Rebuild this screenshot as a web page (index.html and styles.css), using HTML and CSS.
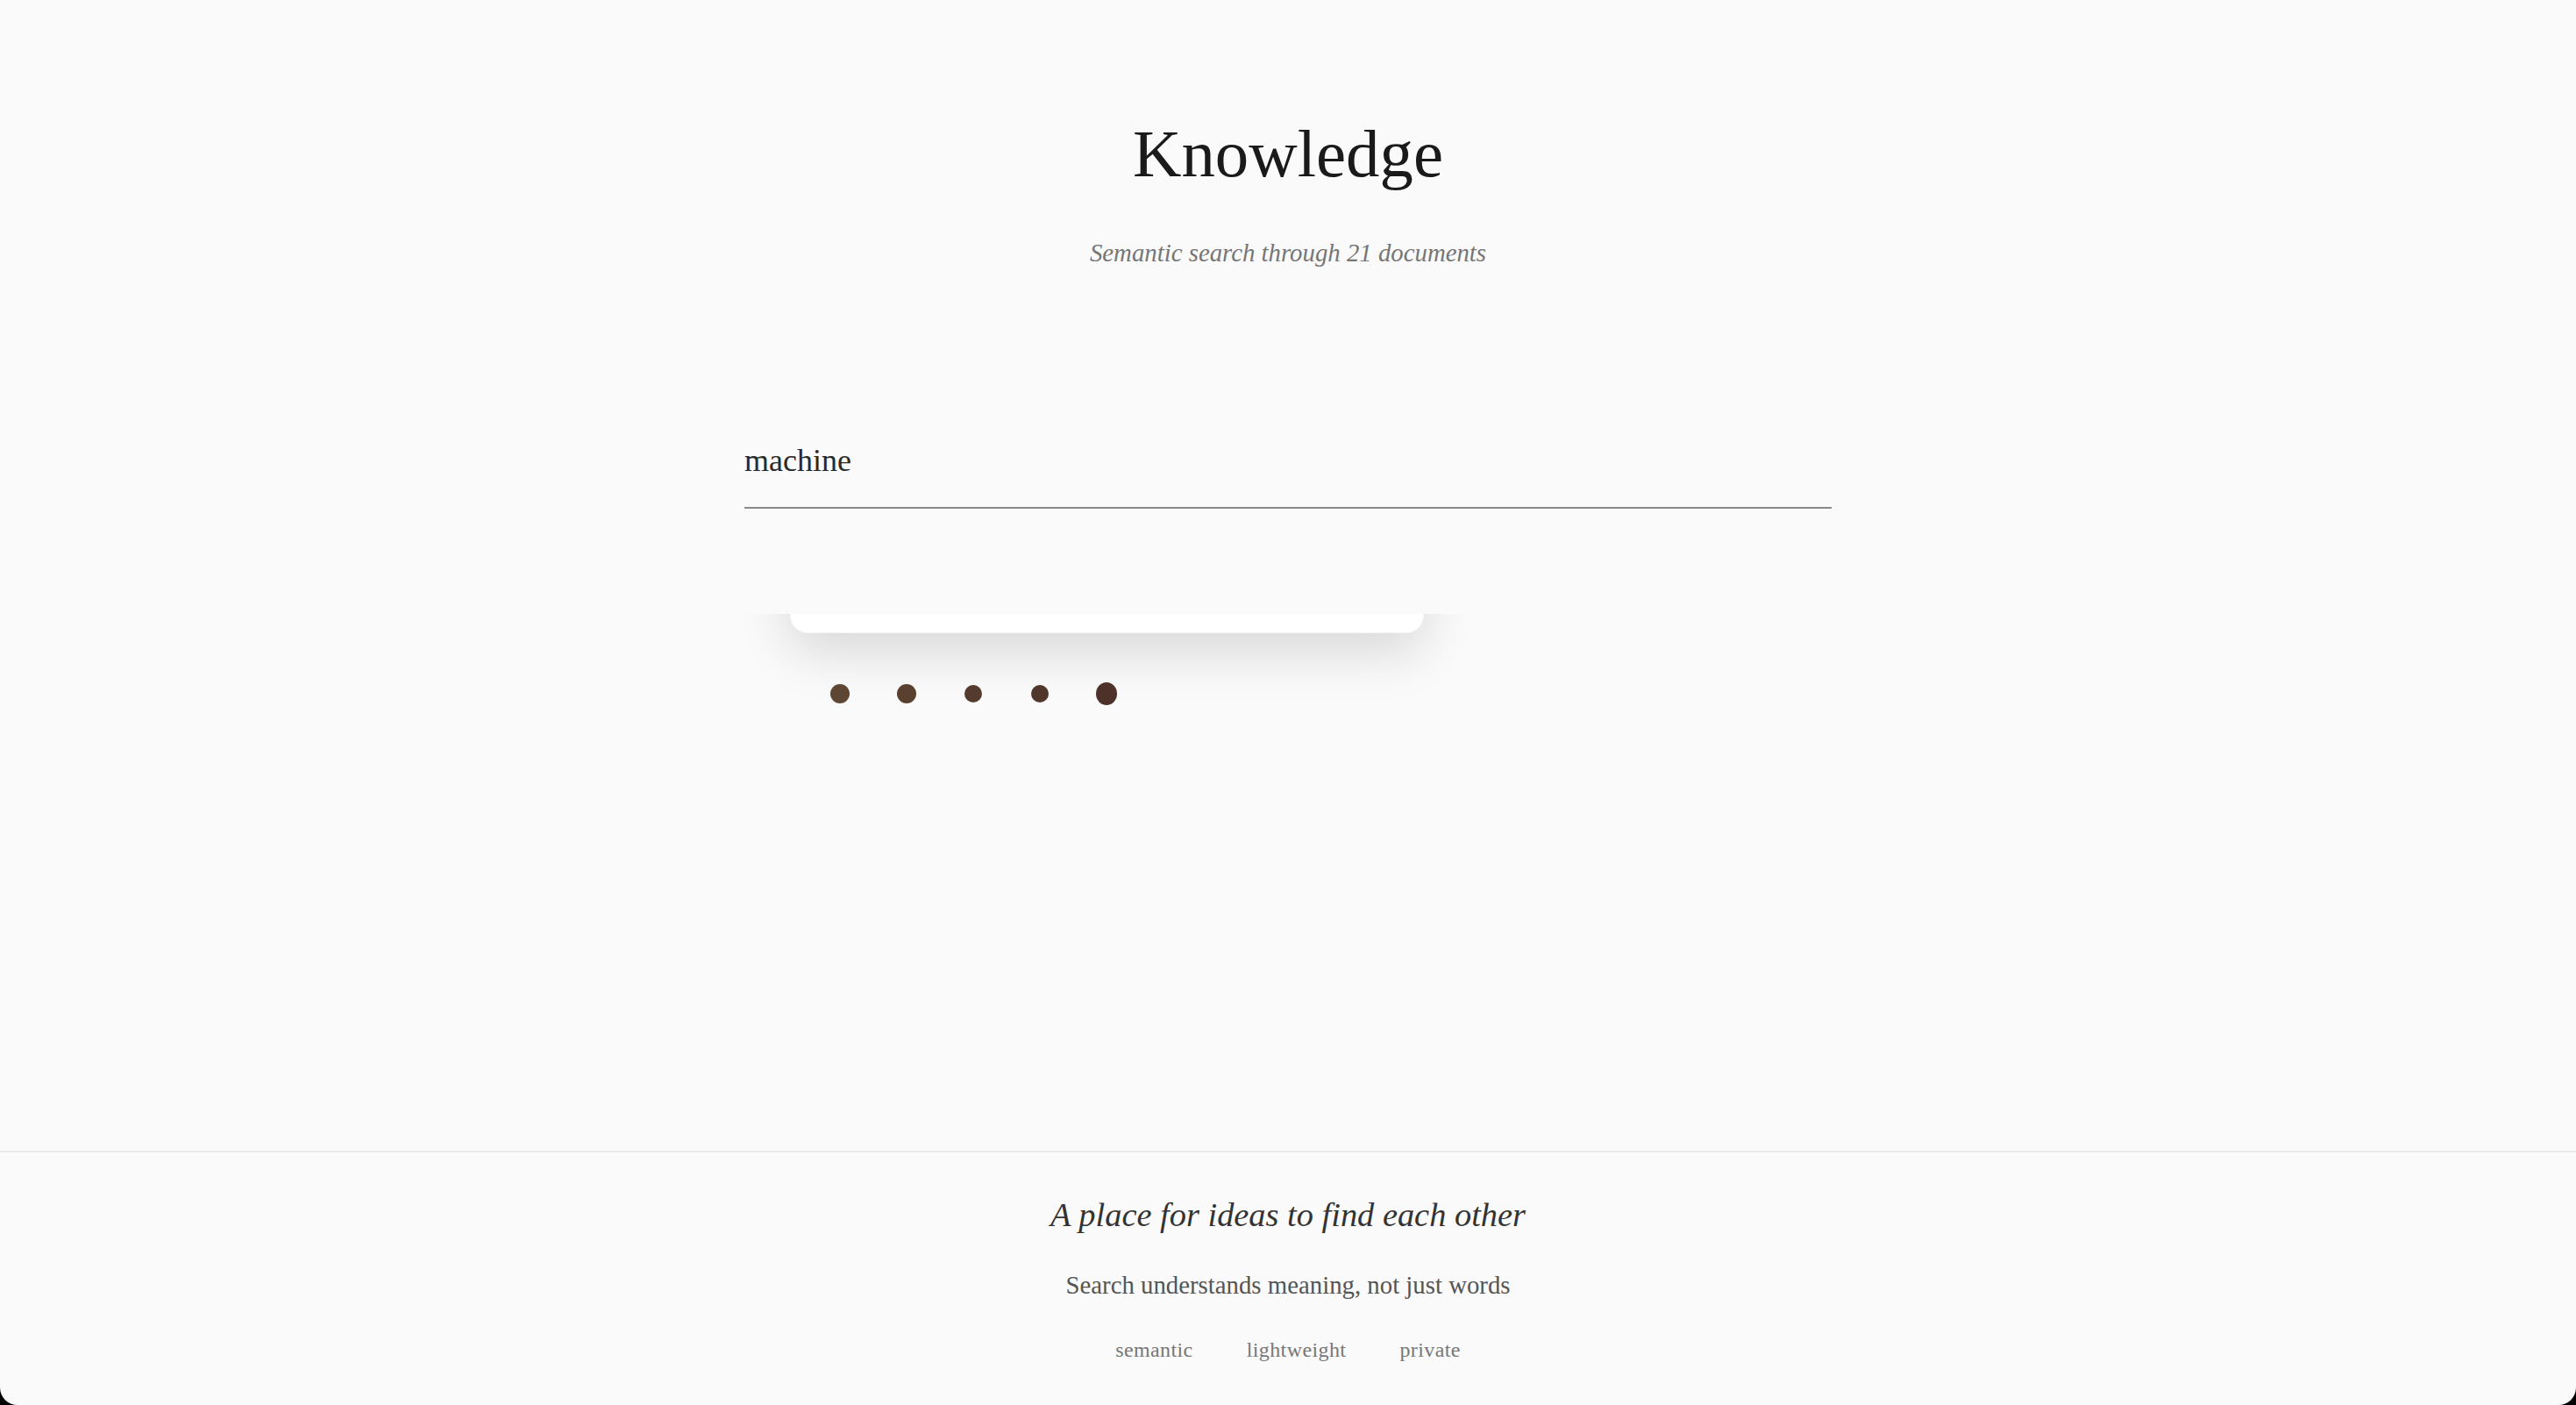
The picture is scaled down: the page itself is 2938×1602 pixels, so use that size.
FILE: index.html
```html
<!DOCTYPE html>
<html lang="en">
<head>
<meta charset="utf-8">
<title>Knowledge</title>
<link rel="stylesheet" href="styles.css">
</head>
<body>
<div class="window">
  <main class="main">
    <header class="header">
      <h1 class="title">Knowledge</h1>
      <p class="subtitle">Semantic search through 21 documents</p>
    </header>
    <div class="search">
      <input class="search-input" type="text" value="machine" aria-label="Search">
    </div>
    <section class="results">
      <div class="card"></div>
      <div class="dots">
        <span class="dot-slot"><span class="dot dot-1"></span></span>
        <span class="dot-slot"><span class="dot dot-2"></span></span>
        <span class="dot-slot"><span class="dot dot-3"></span></span>
        <span class="dot-slot"><span class="dot dot-4"></span></span>
        <span class="dot-slot"><span class="dot dot-5"></span></span>
      </div>
    </section>
  </main>
  <footer class="footer">
    <p class="tagline">A place for ideas to find each other</p>
    <p class="footer-sub">Search understands meaning, not just words</p>
    <ul class="tags">
      <li class="tag">semantic</li>
      <li class="tag">lightweight</li>
      <li class="tag">private</li>
    </ul>
  </footer>
</div>
</body>
</html>
```

FILE: styles.css
```css
html {
  background: #000;
}
body {
  margin: 0;
  font-family: "Liberation Serif", "Times New Roman", serif;
}
.window {
  height: 1602px;
  display: flex;
  flex-direction: column;
  background: #fafafa;
  border-radius: 0 0 20px 20px;
  overflow: hidden;
}
.main {
  flex: 1;
  display: flex;
  flex-direction: column;
  align-items: center;
}
.header {
  padding-top: 130px;
  text-align: center;
}
.title {
  margin: 0;
  font-size: 76.8px;
  line-height: 92px;
  font-weight: 400;
  color: #1a1a1a;
}
.subtitle {
  margin: 45px 0 0;
  font-size: 28.8px;
  line-height: 43.2px;
  font-style: italic;
  color: #767676;
}
.search {
  width: 1240px;
  margin-top: 175px;
}
.search-input {
  display: block;
  width: 100%;
  box-sizing: border-box;
  height: 95px;
  padding: 16px 0 29px;
  margin: 0;
  border: 0;
  border-bottom: 2px solid #8a8a8a;
  background: transparent;
  font-family: "Liberation Serif", "Times New Roman", serif;
  font-size: 36px;
  line-height: 48px;
  color: #2a2a2a;
  outline: none;
}
.results {
  width: 1240px;
  margin-top: 120px;
  height: 200px;
  overflow: hidden;
}
.card {
  width: 723px;
  height: 200px;
  margin: -178px 0 0 52px;
  box-sizing: border-box;
  background: #fff;
  border: 1px solid rgba(0, 0, 0, 0.04);
  border-radius: 20px;
  box-shadow: 0 20px 60px rgba(0, 0, 0, 0.14);
}
.dots {
  display: flex;
  align-items: center;
  gap: 52px;
  height: 26px;
  margin-top: 56px;
  padding-left: 97px;
}
.dot-slot {
  width: 24px;
  display: flex;
  justify-content: center;
}
.dot {
  display: block;
  border-radius: 50%;
}
.dot-1 { width: 22px; height: 22px; background: #5d4634; }
.dot-2 { width: 22px; height: 22px; background: #5a402f; }
.dot-3 { width: 20px; height: 20px; background: #553b2d; }
.dot-4 { width: 20px; height: 20px; background: #51372b; }
.dot-5 { width: 26px; height: 26px; background: #4e3128; }
.footer {
  border-top: 2px solid #ebebeb;
  padding: 48px 0 45px;
  text-align: center;
}
.tagline {
  margin: 0;
  font-size: 38.4px;
  line-height: 46px;
  font-style: italic;
  color: #333;
}
.footer-sub {
  margin: 36px 0 0;
  font-size: 28.8px;
  line-height: 43.2px;
  color: #555;
}
.tags {
  list-style: none;
  margin: 34px 0 0;
  padding: 0;
  display: flex;
  justify-content: center;
  gap: 61px;
}
.tag {
  font-size: 24px;
  line-height: 36px;
  letter-spacing: 0.4px;
  color: #777;
}
```
